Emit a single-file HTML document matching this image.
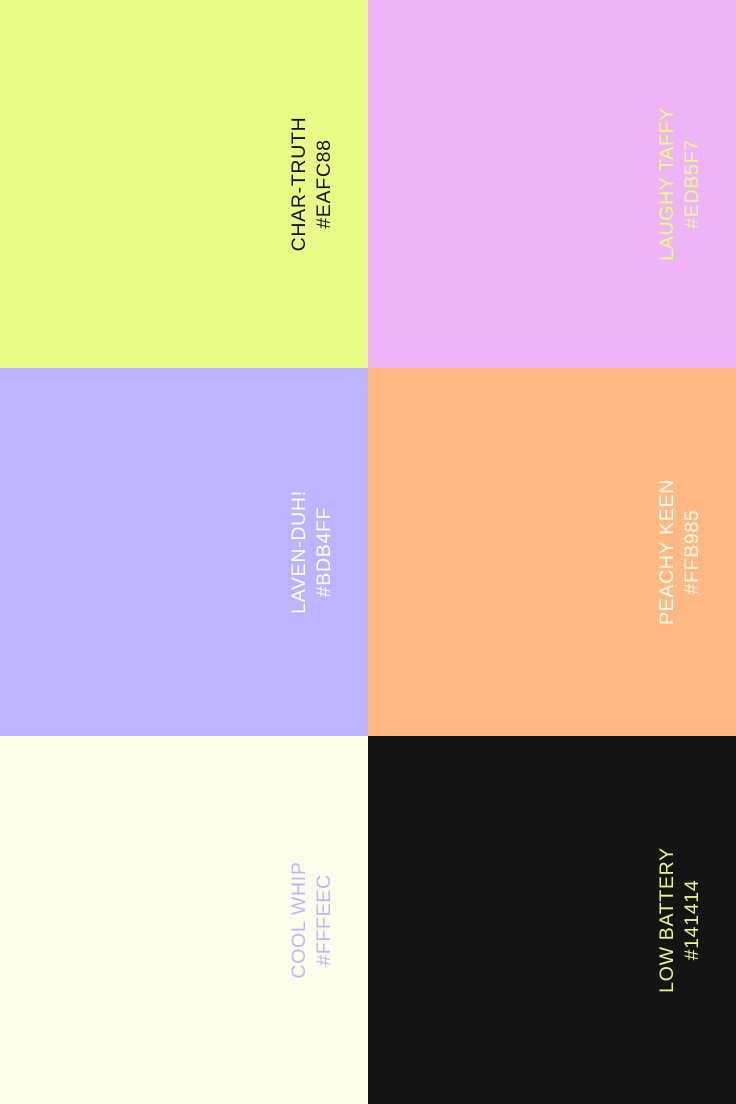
<!DOCTYPE html>
<html><head><style>
html,body{margin:0;padding:0;width:736px;height:1104px;overflow:hidden}
.g{display:grid;grid-template-columns:368px 368px;grid-template-rows:368px 368px 368px}
.c{position:relative}
.t{position:absolute;left:312px;top:184px;width:300px;margin-left:-150px;margin-top:-25px;height:50px;transform:rotate(-90deg);text-align:center;font-family:"Liberation Sans",sans-serif;font-size:19.5px;letter-spacing:0.7px;line-height:25px;white-space:nowrap}
</style></head><body>
<div class="g">
<div class="c" style="background:#EAFC88"><div class="t" style="color:#141414">CHAR-TRUTH<br>#EAFC88</div></div>
<div class="c" style="background:#EDB5F7"><div class="t" style="color:#EAFC88">LAUGHY TAFFY<br>#EDB5F7</div></div>
<div class="c" style="background:#BDB4FF"><div class="t" style="color:#FFFEEC">LAVEN-DUH!<br>#BDB4FF</div></div>
<div class="c" style="background:#FFB985"><div class="t" style="color:#FFFEEC">PEACHY KEEN<br>#FFB985</div></div>
<div class="c" style="background:#FFFEEC"><div class="t" style="color:#BDB4FF">COOL WHIP<br>#FFFEEC</div></div>
<div class="c" style="background:#141414"><div class="t" style="color:#EAFC88">LOW BATTERY<br>#141414</div></div>
</div>
</body></html>
